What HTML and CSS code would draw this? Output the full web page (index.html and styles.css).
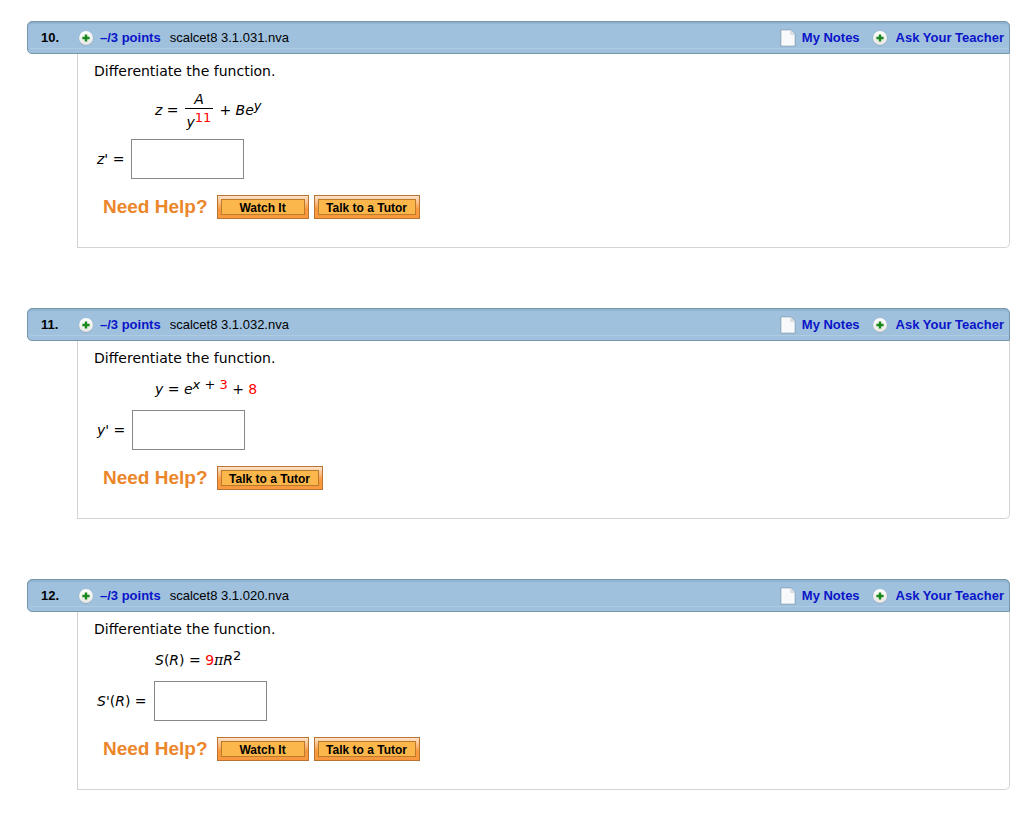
FILE: index.html
```
<!DOCTYPE html>
<html lang="en">
<head>
  <meta charset="UTF-8">
  <meta name="viewport" content="width=device-width, initial-scale=1">
  <title>Assignment</title>
  <link rel="stylesheet" href="styles.css">
</head>
<body>
  <svg class="sprite" aria-hidden="true">
    <defs>
      <linearGradient id="knob" x1="0" y1="0" x2="0" y2="1">
        <stop offset="0" stop-color="#ffffff"/>
        <stop offset="1" stop-color="#e6e6e2"/>
      </linearGradient>
    </defs>
    <symbol id="icon-plus" viewBox="0 0 16 16">
      <circle cx="8" cy="8.5" r="7.3" fill="#8299a9" opacity=".6"/>
      <circle cx="8" cy="8" r="7" fill="url(#knob)"/>
      <path d="M8 4.4v7.2M4.4 8h7.2" stroke="#18881c" stroke-width="2.4"/>
    </symbol>
    <symbol id="icon-note" viewBox="0 0 16 18">
      <path d="M.8.8h10.4l4 4.2v12.2H.8z" fill="#f8f9fa" stroke="#86a2b8"/>
      <path d="M10.8 1.2v4.2h4.2z" fill="#e1e6ea" stroke="#c3ced7" stroke-width=".7"/>
    </symbol>
  </svg>

  <section class="question">
    <div class="header">
      <span class="number">10.</span>
      <svg class="plus"><use href="#icon-plus"/></svg>
      <a class="points" href="#">–/3 points</a>
      <span class="source">scalcet8 3.1.031.nva</span>
      <div class="links">
        <svg class="note"><use href="#icon-note"/></svg>
        <a class="notes" href="#">My Notes</a>
        <svg class="plus"><use href="#icon-plus"/></svg>
        <a href="#">Ask Your Teacher</a>
      </div>
    </div>
    <div class="content">
      <p class="prompt">Differentiate the function.</p>
      <div class="formula">
        <span><i>z</i> =</span>
        <span class="fraction">
          <span class="top"><i>A</i></span>
          <span class="bottom"><i>y</i><sup class="red">11</sup></span>
        </span>
        <span>+ <i>Be</i><sup><i>y</i></sup></span>
      </div>
      <div class="answer">
        <label for="answer10"><i>z'</i> =</label>
        <input type="text" id="answer10">
      </div>
      <div class="help">
        <span class="help-title">Need Help?</span>
        <button class="watch" type="button"><span>Watch It</span></button>
        <button class="tutor" type="button"><span>Talk to a Tutor</span></button>
      </div>
    </div>
  </section>

  <section class="question">
    <div class="header">
      <span class="number">11.</span>
      <svg class="plus"><use href="#icon-plus"/></svg>
      <a class="points" href="#">–/3 points</a>
      <span class="source">scalcet8 3.1.032.nva</span>
      <div class="links">
        <svg class="note"><use href="#icon-note"/></svg>
        <a class="notes" href="#">My Notes</a>
        <svg class="plus"><use href="#icon-plus"/></svg>
        <a href="#">Ask Your Teacher</a>
      </div>
    </div>
    <div class="content">
      <p class="prompt">Differentiate the function.</p>
      <div class="formula">
        <span><i>y</i> = <i>e</i><sup><i>x</i> + <span class="red">3</span></sup> + <span class="red">8</span></span>
      </div>
      <div class="answer">
        <label for="answer11"><i>y'</i> =</label>
        <input type="text" id="answer11">
      </div>
      <div class="help">
        <span class="help-title">Need Help?</span>
        <button class="tutor" type="button"><span>Talk to a Tutor</span></button>
      </div>
    </div>
  </section>

  <section class="question">
    <div class="header">
      <span class="number">12.</span>
      <svg class="plus"><use href="#icon-plus"/></svg>
      <a class="points" href="#">–/3 points</a>
      <span class="source">scalcet8 3.1.020.nva</span>
      <div class="links">
        <svg class="note"><use href="#icon-note"/></svg>
        <a class="notes" href="#">My Notes</a>
        <svg class="plus"><use href="#icon-plus"/></svg>
        <a href="#">Ask Your Teacher</a>
      </div>
    </div>
    <div class="content">
      <p class="prompt">Differentiate the function.</p>
      <div class="formula">
        <span><i>S</i>(<i>R</i>) = <span class="red">9</span><i class="pi">π</i><i>R</i><sup>2</sup></span>
      </div>
      <div class="answer">
        <label for="answer12"><i>S'</i>(<i>R</i>) =</label>
        <input type="text" id="answer12">
      </div>
      <div class="help">
        <span class="help-title">Need Help?</span>
        <button class="watch" type="button"><span>Watch It</span></button>
        <button class="tutor" type="button"><span>Talk to a Tutor</span></button>
      </div>
    </div>
  </section>
</body>
</html>
```
FILE: styles.css
```
* {
  box-sizing: border-box;
}
body {
  margin: 0;
  padding: 21px 14px 0 27px;
  background: white;
  color: black;
  font-family: Verdana, "DejaVu Sans", sans-serif;
  font-size: 14px;
  line-height: 18px;
}
.sprite {
  position: absolute;
  width: 0;
  height: 0;
}
.question {
  margin-bottom: 60px;
}
.header {
  display: flex;
  align-items: center;
  height: 33px;
  padding: 0 5px 0 13px;
  background: #9fc1de;
  border: 1px solid #7796aa;
  border-radius: 5px 5px 0 5px;
  box-shadow: inset 0 2px 1px #8fb3d0, inset 0 -4px 0 #9fc1de, inset 0 -5px 0 #adcbe3;
  font-family: Arial, "Liberation Sans", sans-serif;
  font-size: 13px;
}
.header a {
  color: #0a14c8;
  font-weight: bold;
  text-decoration: none;
}
.number {
  width: 37px;
  font-weight: bold;
}
.plus {
  width: 16px;
  height: 16px;
  margin-right: 6px;
}
.points {
  margin-right: 9px;
}
.links {
  display: flex;
  align-items: center;
  margin-left: auto;
}
.links .plus {
  margin-right: 8px;
}
.note {
  width: 16px;
  height: 18px;
  margin-right: 6px;
}
.notes {
  margin-right: 12px;
}
.content {
  margin-left: 50px;
  padding: 8px 16px 28px;
  border: 1px solid #d3d3d3;
  border-top: 0;
  border-radius: 0 0 5px 0;
}
.prompt {
  margin: 0;
}
.formula {
  display: flex;
  align-items: center;
  gap: 6px;
  padding: 11px 0 10px 61px;
  line-height: 22px;
}
.fraction {
  display: flex;
  flex-direction: column;
  text-align: center;
}
.fraction span {
  padding: 0 2px;
}
.fraction .top {
  height: 18px;
  border-bottom: 1px solid black;
  line-height: 17px;
}
.fraction .bottom {
  height: 20px;
  line-height: 26px;
}
sup {
  font-size: 13px;
  line-height: 0;
  vertical-align: 5px;
}
.red {
  color: #ff0000;
}
.pi {
  font-family: "DejaVu Serif", serif;
  font-size: 14px;
  line-height: 0;
}
.answer {
  display: flex;
  align-items: center;
  gap: 7px;
  padding-left: 3px;
}
.answer input {
  width: 113px;
  height: 40px;
  padding: 4px;
  border: 1px solid #888888;
  font-size: 14px;
}
.help {
  display: flex;
  align-items: center;
  gap: 5px;
  margin-top: 16px;
  padding-left: 9px;
  font-family: Arial, "Liberation Sans", sans-serif;
}
.help-title {
  margin-right: 4px;
  color: #eb862b;
  font-size: 19px;
  font-weight: bold;
}
button {
  height: 24px;
  padding: 3px;
  background: linear-gradient(#fde3cb, #f9983d 60%);
  border: 1px solid #b97432;
  color: black;
  cursor: pointer;
  font-family: Arial, "Liberation Sans", sans-serif;
  font-size: 12px;
  font-weight: bold;
}
button span {
  display: block;
  height: 16px;
  background: #fbb74b;
  border: 1px solid #bb7b2c;
  line-height: 16px;
}
.watch {
  width: 92px;
}
.tutor {
  width: 106px;
}
```
